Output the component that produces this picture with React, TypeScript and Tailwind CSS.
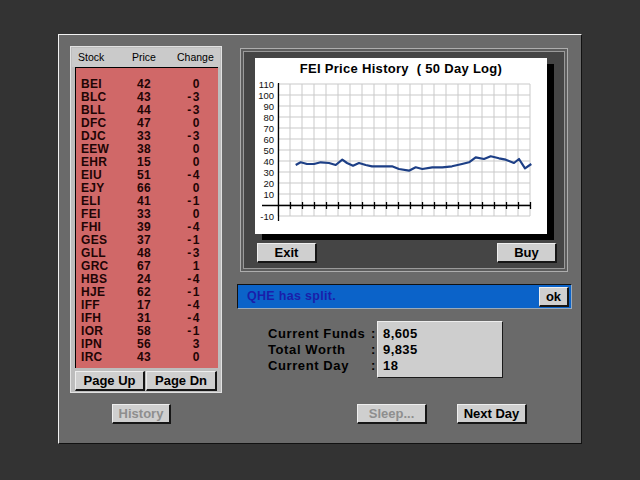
import React from 'react';

const stocks: [string, number, number][] = [
  ['BEI', 42, 0],
  ['BLC', 43, -3],
  ['BLL', 44, -3],
  ['DFC', 47, 0],
  ['DJC', 33, -3],
  ['EEW', 38, 0],
  ['EHR', 15, 0],
  ['EIU', 51, -4],
  ['EJY', 66, 0],
  ['ELI', 41, -1],
  ['FEI', 33, 0],
  ['FHI', 39, -4],
  ['GES', 37, -1],
  ['GLL', 48, -3],
  ['GRC', 67, 1],
  ['HBS', 24, -4],
  ['HJE', 62, -1],
  ['IFF', 17, -4],
  ['IFH', 31, -4],
  ['IOR', 58, -1],
  ['IPN', 56, 3],
  ['IRC', 43, 0],
];

const history =
  '40.7,107 45.7,104.3 52,106 59,106 65.7,104.3 74,105 80.7,107 87.3,101.7 92,105 98,107.7 104,105 110.7,107 117,108.3 127,108.3 137,108.3 144,111 154,112.7 160.7,109.3 167.3,111 177.3,109.3 187.3,109.3 197,108.3 207,106 214,104.3 220.7,99.3 229,101 235.7,98.3 244,100.3 250.7,101.7 259,105 264,101 270,110.3 276.3,106';

const MacButton = ({ label, className, disabled }: { label: string; className: string; disabled?: boolean }) => (
  <div
    className={`flex items-center justify-center bg-[#cfcfcf] border-t border-l border-t-[#eeeeee] border-l-[#eeeeee] border-r-2 border-b-2 border-r-[#161616] border-b-[#161616] text-[13px] font-bold leading-none ${
      disabled ? 'text-[#8e8e8e]' : 'text-black'
    } ${className}`}
  >
    {label}
  </div>
);

const Chart = () => {
  const vx = Array.from({ length: 22 }, (_, i) => 23 + 12 * i);
  const hy = Array.from({ length: 13 }, (_, j) => 26 + 11 * j);
  const labels = [110, 100, 90, 80, 70, 60, 50, 40, 30, 20, 10];
  return (
    <svg width="292" height="156" viewBox="0 20 292 156">
      {vx.map((x) => (
        <line key={'v' + x} x1={x} y1={26} x2={x} y2={158} stroke="#c9c9c9" strokeWidth="1" />
      ))}
      {hy.map((y) => (
        <line key={'h' + y} x1={23} y1={y} x2={275} y2={y} stroke="#c9c9c9" strokeWidth="1" />
      ))}
      <line x1={23.5} y1={25} x2={23.5} y2={163} stroke="#000" strokeWidth="1.3" />
      <line x1={7} y1={147.5} x2={276} y2={147.5} stroke="#000" strokeWidth="1.3" />
      {vx.slice(1).map((x) => (
        <line key={'t' + x} x1={x + 0.5} y1={144} x2={x + 0.5} y2={151} stroke="#000" strokeWidth="1.3" />
      ))}
      {labels.map((v, i) => (
        <text
          key={v}
          x={19}
          y={26 + 11 * i + 3.5}
          textAnchor="end"
          fontSize="9.5"
          fontFamily="'Liberation Sans', Arial, sans-serif"
          fill="#111"
        >
          {v}
        </text>
      ))}
      <text x={19} y={161.5} textAnchor="end" fontSize="9.5" fontFamily="'Liberation Sans', Arial, sans-serif" fill="#111">
        -10
      </text>
      <polyline points={history} fill="none" stroke="#1d3f86" strokeWidth="2.2" strokeLinejoin="round" />
    </svg>
  );
};

export default function App() {
  return (
    <div className="w-[640px] h-[480px] bg-[#333333] pt-[34px] pl-[58px] font-['Liberation_Sans',Arial,sans-serif] overflow-hidden">
      <div className="w-[524px] h-[410px] bg-[#6a6a6a] border border-t-[#f2f2f2] border-l-[#f2f2f2] border-r-[#111111] border-b-[#111111] pt-[11px] pl-[11px] flex gap-[15px]">
        {/* stock list column */}
        <div className="w-[152px] flex flex-col">
          <div className="w-[152px] h-[347px] bg-[#bdbdbd] border border-[#e2e2e2] p-[1px] flex flex-col">
            <div className="h-[19px] bg-[#cacaca] flex items-center text-[10.5px] text-black leading-none">
              <span className="ml-[6px] w-[54px]">Stock</span>
              <span className="w-[45px]">Price</span>
              <span>Change</span>
            </div>
            <div className="ml-[3px] w-[143px] h-[301px] bg-[#d06868] border-t border-l border-black pt-[9px]">
              {stocks.map(([sym, price, chg]) => (
                <div key={sym} className="flex h-[13px] items-center text-[12px] font-bold text-[#1e0505] leading-none">
                  <span className="ml-[5px] w-[56px] tracking-[0.3px]">{sym}</span>
                  <span className="w-[40px] tracking-[0.3px]">{price}</span>
                  <span className="w-[24px] text-right tracking-[1.5px]">{chg}</span>
                </div>
              ))}
            </div>
            <div className="flex ml-[3px] mt-[3px] gap-[1px]">
              <MacButton label="Page Up" className="w-[70px] h-[20px]" />
              <MacButton label="Page Dn" className="w-[71px] h-[20px]" />
            </div>
          </div>
          <MacButton label="History" disabled className="ml-[42px] mt-[11px] w-[59px] h-[20px]" />
        </div>

        {/* right column */}
        <div className="w-[335px] flex flex-col">
          <div className="ml-[3px] mt-[2px] w-[328px] h-[224px] border border-[#adadad] bg-[#5c5c5c] p-[2px]">
            <div className="w-full h-full border border-[#9a9a9a] bg-[#454545] pl-[11px] pt-[6px] flex flex-col">
              <div className="w-[292px] h-[176px] bg-white shadow-[7px_6px_0_#000] flex flex-col">
                <div className="h-[20px] flex items-center justify-center text-[13px] font-bold text-black whitespace-pre leading-none pt-[1px] tracking-[0.3px]">
                  {'FEI Price History  ( 50 Day Log)'}
                </div>
                <Chart />
              </div>
              <div className="flex mt-[9px] w-[302px] justify-between pl-[2px]">
                <MacButton label="Exit" className="w-[60px] h-[20px]" />
                <MacButton label="Buy" className="w-[60px] h-[20px]" />
              </div>
            </div>
          </div>

          <div className="mt-[12px] w-[335px] h-[25px] bg-[#0b63c9] border border-t-[#111] border-l-[#111] border-r-[#9ab] border-b-[#9ab] flex items-center justify-between pl-[9px] pr-[2px]">
            <span className="text-[12.5px] font-bold text-[#1a1eaa] tracking-[0.3px]">QHE has split.</span>
            <MacButton label="ok" className="w-[30px] h-[20px]" />
          </div>

          <div className="mt-[12px] ml-[31px] flex">
            <div className="w-[109px] pt-[4px] flex flex-col text-[13px] font-bold text-black tracking-[0.6px] leading-none">
              {['Current Funds', 'Total Worth', 'Current Day'].map((l) => (
                <div key={l} className="h-[16px] flex items-center justify-between pr-[1px]">
                  <span>{l}</span>
                  <span>:</span>
                </div>
              ))}
            </div>
            <div className="w-[126px] h-[57px] bg-[#cecece] border border-t-[#eeeeee] border-l-[#eeeeee] border-r-[#1a1a1a] border-b-[#1a1a1a] pt-[3px] pl-[5px] flex flex-col text-[13px] font-bold text-black leading-none tracking-[0.4px]">
              {['8,605', '9,835', '18'].map((v) => (
                <div key={v} className="h-[16px] flex items-center">
                  {v}
                </div>
              ))}
            </div>
          </div>

          <div className="mt-[26px] ml-[120px] flex gap-[30px]">
            <MacButton label="Sleep..." disabled className="w-[70px] h-[20px]" />
            <MacButton label="Next Day" className="w-[70px] h-[20px]" />
          </div>
        </div>
      </div>
    </div>
  );
}
